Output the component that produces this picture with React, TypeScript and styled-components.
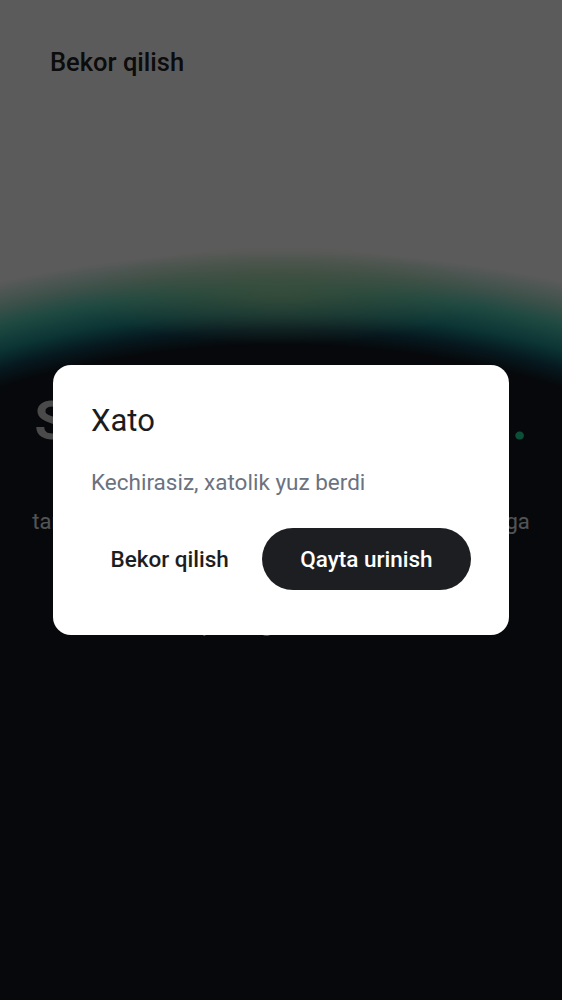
import React from "react";
import styled, { createGlobalStyle } from "styled-components";

const GlobalStyle = createGlobalStyle`
  html, body {
    margin: 0;
    padding: 0;
    background: #131921;
  }
  * { box-sizing: border-box; }
  body {
    font-family: Roboto, "Liberation Sans", Arial, sans-serif;
  }
`;

const Page = styled.div`
  min-height: 1000px;
  display: flex;
  flex-direction: column;
  background:
    linear-gradient(to bottom, rgba(19, 25, 33, 0) 615px, #131921 615px),
    radial-gradient(ellipse 200px 50px at 50% 294px, rgba(205, 222, 150, 0.55) 0%, rgba(205, 222, 150, 0) 100%),
    radial-gradient(
      ellipse 520px 270px at 50% 615px,
      #131921 0%,
      #131921 100%,
      rgb(17, 72, 89) 106%,
      rgb(33, 147, 147) 112%,
      rgb(86, 206, 183) 120%,
      rgb(175, 228, 208) 127%,
      #ffffff 135%
    );
`;

const Header = styled.header`
  padding: 47px 50px 0;
  display: flex;
`;

const LinkButton = styled.button`
  border: none;
  background: none;
  padding: 0;
  font-family: inherit;
  font-size: 25.5px;
  line-height: 30px;
  font-weight: 500;
  color: #232323;
  cursor: pointer;
`;

const Hero = styled.section`
  margin-top: 315px;
  padding: 0 20px;
  display: flex;
  flex-direction: column;
  align-items: center;
  text-align: center;
`;

const Title = styled.h1`
  margin: 0;
  font-size: 54px;
  line-height: 58px;
  font-weight: 700;
  color: #d0d0d0;
  white-space: nowrap;
`;

const Dot = styled.span`
  color: #22dc9c;
`;

const Lead = styled.p`
  margin: 21px 0 0;
  font-size: 22px;
  line-height: 34px;
  color: #e6e7ea;
  white-space: nowrap;
`;

const Overlay = styled.div`
  position: fixed;
  inset: 0;
  background: rgba(0, 0, 0, 0.643);
  display: flex;
  align-items: center;
  justify-content: center;
`;

const Dialog = styled.div`
  width: 456px;
  height: 270px;
  background: #ffffff;
  border-radius: 18px;
  padding: 37px 38px 0;
  display: flex;
  flex-direction: column;
`;

const DialogTitle = styled.h2`
  margin: 0;
  font-size: 31px;
  line-height: 38px;
  font-weight: 400;
  color: #1b1c20;
`;

const DialogText = styled.p`
  margin: 27px 0 0;
  font-size: 22.5px;
  line-height: 30px;
  color: #6b7280;
`;

const Actions = styled.div`
  margin-top: 31px;
  display: flex;
  justify-content: flex-end;
  gap: 15px;
`;

const ActionButton = styled.button<{ $primary?: boolean }>`
  height: 62px;
  border: none;
  border-radius: 31px;
  padding: 0 ${(p) => (p.$primary ? "38.5px" : "18px")};
  font-family: inherit;
  font-size: 22.5px;
  font-weight: 500;
  background: ${(p) => (p.$primary ? "#1d1e22" : "transparent")};
  color: ${(p) => (p.$primary ? "#ffffff" : "#1d1e22")};
  cursor: pointer;
`;

export default function App() {
  return (
    <>
      <GlobalStyle />
      <Page>
        <Header>
          <LinkButton>Bekor qilish</LinkButton>
        </Header>
        <Hero>
          <Title>
            Sayohatni boshlang<Dot>.</Dot>
          </Title>
          <Lead>
            Ilova orqali yangi joylarni kashf eting va ularni
            <br />
            tanlang, sevimli manzillaringizni saqlang, do'stlarga
            <br />
            ulashing. Har bir sayohatni oldindan
            <br />
            rejalashtiring va eng yaxshi takliflarni
            <br />
            topishingiz mumkin.
          </Lead>
        </Hero>
      </Page>
      <Overlay>
        <Dialog>
          <DialogTitle>Xato</DialogTitle>
          <DialogText>Kechirasiz, xatolik yuz berdi</DialogText>
          <Actions>
            <ActionButton>Bekor qilish</ActionButton>
            <ActionButton $primary>Qayta urinish</ActionButton>
          </Actions>
        </Dialog>
      </Overlay>
    </>
  );
}
